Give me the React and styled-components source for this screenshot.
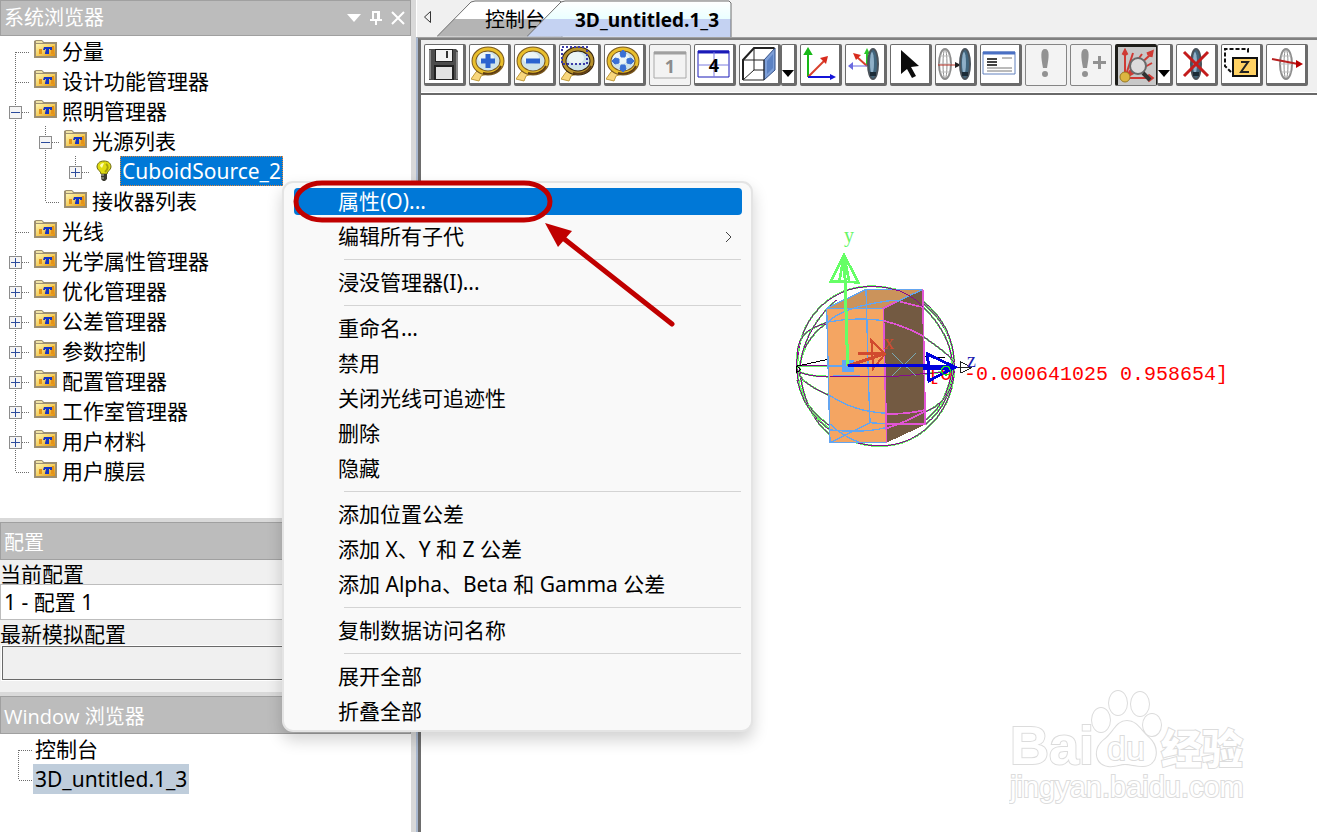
import React from "react";
import styled, { createGlobalStyle, css } from "styled-components";

const Global = createGlobalStyle`
  *, *::before, *::after { box-sizing: border-box; }
  body { margin: 0; background: #fff; }
  body, button, input, select {
    font-family: "Noto Sans", "Noto Sans CJK SC", sans-serif;
    font-size: 21px;
    color: #000;
  }
  button { padding: 0; border: 0; background: none; text-align: left; }
  ul { list-style: none; margin: 0; padding: 0; }
  svg { display: block; flex: none; }
`;

const Shell = styled.div`
  position: relative;
  display: flex;
  min-height: 100vh;
  overflow: hidden;
  background: #d9d9d9;
`;

const Sidebar = styled.aside`
  flex: none;
  width: 411px;
  display: flex;
  flex-direction: column;
  gap: 4px;
`;

const Panel = styled.section`
  display: flex;
  flex-direction: column;
  flex-grow: ${(p) => (p.$grow ? 1 : 0)};
  min-height: ${(p) => p.$min || 0}px;
  background: ${(p) => p.$bg || "#fff"};
`;

const PanelHead = styled.header`
  display: flex;
  align-items: center;
  justify-content: space-between;
  height: ${(p) => (p.$first ? 36 : 38)}px;
  padding: ${(p) => (p.$first ? 0 : 3)}px 3px 0;
  border: 1px solid #a0a0a0;
  background: #bcbcbc;
`;

const PanelTitle = styled.h2`
  margin: 0;
  font-family: "Open Sans", "Noto Sans CJK SC", sans-serif;
  font-size: 20px;
  line-height: 28px;
  font-weight: 400;
  color: #fff;
`;

const HeadTools = styled.div`
  display: flex;
  gap: 4px;
`;

const HeadButton = styled.button`
  width: 18px;
  height: 18px;
`;

const Row = styled.li`
  display: flex;
  height: 30px;
`;

const GuideButton = styled.button`
  display: block;
  width: 30px;
  height: 30px;
`;

const IconSlot = styled.span`
  display: flex;
  justify-content: center;
  width: 24px;
  margin: 4px 2px 0 4px;
`;

const RowLabel = styled.span`
  padding: 0 2px;
  line-height: 30px;
  white-space: nowrap;
  ${(p) =>
    p.$state === "selected" &&
    css`
      background: #0078d7;
      color: #fff;
      outline: 1px dotted #e8883a;
      outline-offset: -1px;
    `}
  ${(p) => p.$state === "inactive" && css`background: #bfcddb;`}
`;

const FieldLabel = styled.label`
  height: ${(p) => p.$h || 24}px;
  line-height: 28px;
`;

const ConfigSelect = styled.select`
  appearance: none;
  height: 36px;
  padding: 0 3px;
  border: 1px solid #bdbdbd;
  border-radius: 0;
  background: #fff;
`;

const ReadOnlyBox = styled.input`
  height: 34px;
  margin: 1px 0 12px 2px;
  border: 1px solid #696969;
  outline: 1px solid #fff;
  background: #f0f0f0;
`;

const Main = styled.main`
  flex: 1;
  min-width: 0;
  margin-left: 5px;
  display: flex;
  flex-direction: column;
  background: #f0f0f0;
`;

const TabBar = styled.nav`
  display: flex;
  height: 37px;
  padding-left: 5px;
  border-left: 1px solid #fff;
`;

const TabScroll = styled.button`
  width: 15px;
  height: 36px;
`;

const Tab = styled.button`
  position: relative;
  z-index: 0;
  height: 37px;
  width: ${(p) => p.$w}px;
  padding: 2px 0 0 48px;
  margin-right: -36px;
  font-family: "Open Sans", "Noto Sans CJK SC", sans-serif;
  font-size: ${(p) => (p.$active ? 19 : 20)}px;
  line-height: 34px;
  font-weight: ${(p) => (p.$active ? 700 : 400)};
  white-space: nowrap;
`;

const TabShape = styled.svg`
  position: absolute;
  z-index: -1;
  inset: 0;
`;

const Frame = styled.div`
  flex: 1;
  display: flex;
  flex-direction: column;
  border-left: 2px solid #a9b8cf;
  border-top: 1px solid #a0a0a0;
`;

const Inner = styled.div`
  flex: 1;
  display: flex;
  flex-direction: column;
  border-left: 3px solid #6d6d6d;
  border-top: 2px solid #808080;
`;

const Toolbar = styled.div`
  display: flex;
  flex: none;
  gap: 3px;
  height: 53px;
  padding: 4px 3px 0;
  overflow: hidden;
  border-bottom: 1px solid #fff;
`;

const ToolGroup = styled.div`
  display: flex;
`;

const ToolButton = styled.button`
  flex: none;
  display: flex;
  align-items: center;
  justify-content: center;
  width: 42px;
  height: 42px;
  border: solid #6b6b6b;
  border-width: 1px 3px 3px 1px;
  border-radius: 2px;
  background: #fff;
  ${(p) => p.disabled && css`border-width: 1px; border-color: #858585; background: #f3f3f3;`}
  ${(p) =>
    p.$pressed &&
    css`border: 3px solid #1e1e1a; border-right-width: 1px; border-bottom: 1px solid #777; background: #c8c8c8;`}
`;

const DropButton = styled(ToolButton)`
  width: 16px;
  align-items: flex-end;
`;

const Canvas = styled.div`
  position: relative;
  flex: 1;
  border-top: 2px solid #696969;
  background: #fff;
`;

const Scene = styled.svg`
  position: absolute;
  left: 359px;
  top: 125px;
`;

const Watermark = styled.svg`
  position: absolute;
  right: 58px;
  bottom: 20px;
`;

const Menu = styled.ul`
  position: absolute;
  left: 282px;
  top: 181px;
  width: 471px;
  && { padding: 1px 9px 1px 10px; }
  border: 2px solid #e4e4e4;
  border-radius: 11px;
  background: #f9f9f9;
  box-shadow: 0 8px 16px rgba(0, 0, 0, 0.18);
`;

const MenuItem = styled.button`
  display: flex;
  align-items: center;
  justify-content: space-between;
  width: 448px;
  height: ${(p) => (p.$on ? 27 : 35)}px;
  margin: ${(p) => (p.$on ? 4 : 0)}px 0;
  padding: 0 9px 0 44px;
  border-radius: 4px;
  line-height: 27px;
  white-space: nowrap;
  ${(p) => p.$on && css`background: #0078d7; color: #fff;`}
`;

const Divider = styled.li`
  height: 1px;
  margin: 5px 1px 5px 50px;
  background: #d4d4d4;
`;

const Annotation = styled.svg`
  position: absolute;
  left: 283px;
  top: 170px;
  pointer-events: none;
`;

const dots = { stroke: "#6c6c6c", strokeDasharray: "1 1", strokeWidth: 1, fill: "none" };

/* One 30px cell of the tree's connector lines. */
function Guide({ up, down, across, box, w = 30, x = 15.5 }) {
  return (
    <svg width={w} height="30" shapeRendering="crispEdges">
      {up && <path d={`M${x} 0V16`} {...dots} />}
      {down && <path d={`M${x} 16V30`} {...dots} />}
      {across && <path d={`M${x} 16.5H${w}`} {...dots} />}
      {box && (
        <g>
          <rect x="9.5" y="10.5" width="12" height="12" rx="1" fill="#f5f5f5" stroke="#8c8c8c" />
          <path d={box === "+" ? "M11 16.5H20M15.5 12V21" : "M11 16.5H20"} stroke="#2b4a9b" fill="none" />
        </g>
      )}
    </svg>
  );
}

const Folder = () => (
  <svg width="24" height="20" viewBox="0 0 24 20">
    <defs>
      <linearGradient id="fold" x1="0" y1="0" x2="1" y2="1">
        <stop offset="0" stopColor="#fff6b0" />
        <stop offset=".5" stopColor="#f6d060" />
        <stop offset="1" stopColor="#e08c0c" />
      </linearGradient>
    </defs>
    <path d="M0 1L2 0H8L10 2H23V18H0Z" fill="#9d8f72" />
    <path d="M2 1H8L9 3H2Z" fill="#efe2a6" />
    <rect x="2" y="4" width="19" height="12" fill="url(#fold)" />
    <path d="M5 9H8V14H5ZM17 9L17 14H20V6H18Z" fill="#e3921a" />
    <path d="M10 7H18V10H16V9H15V14H11V13L12 9H11V10H9Z" fill="#1433c4" />
  </svg>
);

const Bulb = () => (
  <svg width="20" height="22" viewBox="0 0 20 22">
    <path d="M8 1C3 1 1 4 1 7S5 11 5 14H11C11 11 15 10 15 7S13 1 8 1Z" fill="#e0dc10" stroke="#6d6a12" />
    <path d="M4 6C4 4 6 3 8 3L6 8Z" fill="#ffffb0" />
    <path d="M10 4C13 6 12 9 9 12" fill="none" stroke="#a5a008" strokeWidth="2" />
    <path d="M5 14H11V19L9 21H7L5 19Z" fill="#3a3a30" />
    <path d="M5 15H8M5 18H8" stroke="#b9b9a8" />
  </svg>
);

const TREE = [
  { t: "分量", first: true },
  { t: "设计功能管理器" },
  { t: "照明管理器", box: "-" },
  { t: "光源列表", lvl: 1, box: "-" },
  { t: "CuboidSource_2", lvl: 2, box: "+", bulb: true },
  { t: "接收器列表", lvl: 1, last: true },
  { t: "光线" },
  { t: "光学属性管理器", box: "+" },
  { t: "优化管理器", box: "+" },
  { t: "公差管理器", box: "+" },
  { t: "参数控制", box: "+" },
  { t: "配置管理器", box: "+" },
  { t: "工作室管理器", box: "+" },
  { t: "用户材料", box: "+" },
  { t: "用户膜层", last: true },
];

function TreeRow({ t, lvl = 0, box, first, last, bulb }) {
  const own = <Guide up={!first} down={!last && !bulb} across box={box} />;
  return (
    <Row>
      {Array.from({ length: lvl }, (_, i) => (
        <Guide key={i} up down />
      ))}
      {box ? <GuideButton aria-label={`${box} ${t}`}>{own}</GuideButton> : own}
      <IconSlot>{bulb ? <Bulb /> : <Folder />}</IconSlot>
      <RowLabel $state={bulb && "selected"}>{t}</RowLabel>
    </Row>
  );
}

/* Toolbar drawings, each on a 36px grid. */
const Lens = ({ children, dark }) => (
  <g>
    <path d="M0 33L8 35L10 30L16 28L8 23L5 26Z" fill="#f8d67c" stroke="#c09a38" />
    <ellipse cx="17" cy="15" rx="14" ry="12" fill="#cfe3ea" stroke={dark ? "#33220e" : "#7a5a22"} strokeWidth="5" />
    <ellipse cx="17" cy="15" rx="14" ry="12" fill="none" stroke={dark ? "#b8922c" : "#e9bf2c"} strokeWidth="3" />
    <path d="M30 20A14 12 0 0 1 12 27" fill="none" stroke="#5f3d14" strokeWidth="2" />
    <ellipse cx="15" cy="12" rx="8" ry="6" fill="#ecf5f6" />
    {children}
  </g>
);

const LensSide = ({ cx }) => (
  <g>
    <ellipse cx={cx} cy="18" rx="5" ry="15" fill="#41667e" stroke="#4a525a" strokeWidth="2" />
    <ellipse cx={cx - 1} cy="17" rx="2" ry="11" fill="#8fb0c8" />
    <path d={`M${cx - 3} 28H${cx + 3}`} stroke="#1c2c38" strokeWidth="4" />
  </g>
);

const WireLens = ({ cx }) => (
  <g fill="none" stroke="#8d8d8d">
    <ellipse cx={cx} cy="18" rx="6" ry="15" strokeWidth="2" />
    <ellipse cx={cx} cy="18" rx="2" ry="15" />
    <path d={`M${cx - 5} 10H${cx + 5}M${cx - 6} 18H${cx + 6}M${cx - 5} 26H${cx + 5}`} stroke="#bdbdbd" />
  </g>
);

const ICONS = {
  save: (
    <g>
      <path d="M3 3H30L32 5V34H3Z" fill="#4d4d4d" />
      <path d="M4 4V33M31 6V33" stroke="#8a8a8a" strokeWidth="2" />
      <rect x="9" y="3" width="18" height="13" fill="#222" />
      <rect x="10" y="4" width="16" height="11" fill="#f2f2f2" />
      <path d="M21 5V12" stroke="#333" strokeWidth="2" />
      <rect x="8" y="19" width="20" height="15" fill="#222" />
      <rect x="10" y="21" width="16" height="12" fill="#e3e3e3" />
    </g>
  ),
  zoomIn: <Lens><path d="M10 15H24M17 8V22" stroke="#2b63cf" strokeWidth="5" /></Lens>,
  zoomOut: <Lens><path d="M10 15H24" stroke="#2b63cf" strokeWidth="5" /></Lens>,
  zoomBox: (
    <Lens dark>
      <path d="M1 1H26V18H1Z" fill="none" stroke="#3b3ba8" strokeWidth="2" strokeDasharray="2 2" />
    </Lens>
  ),
  zoomFit: (
    <Lens>
      <path d="M17 4L20 7L19 11H15L14 7ZM17 26L20 23L19 19H15L14 23ZM6 15L9 12L13 13V17L9 18ZM28 15L25 12L21 13V17L25 18Z" fill="#3a70d4" stroke="#3a70d4" />
    </Lens>
  ),
  one: (
    <g>
      <path d="M2 5H34V31H2Z" fill="#f3f3f3" stroke="#a9a9a9" />
      <path d="M2 6H34" stroke="#a0a0a0" strokeWidth="3" />
      <text x="18" y="26" textAnchor="middle" fontSize="18" fontWeight="700" fill="#8c8c8c">1</text>
    </g>
  ),
  four: (
    <g>
      <path d="M2 5H33V31H2Z" fill="#fff" stroke="#1a1ab8" strokeWidth="1" />
      <path d="M2 6H33" stroke="#1a1ab8" strokeWidth="3" />
      <path d="M2 19H33M18 6V31" stroke="#7d7de0" />
      <text x="18" y="26" textAnchor="middle" fontSize="18" fontWeight="700">4</text>
    </g>
  ),
  cube: (
    <g fill="none" stroke="#222">
      <path d="M23 14L34 2V24L23 34Z" fill="#7d9fd8" stroke="#334f86" />
      <path d="M26 15L32 8V22L26 28Z" fill="#5b82c4" stroke="none" />
      <path d="M2 14H23V34H2ZM2 14L13 2H34M13 2V24M2 34L13 24H23" strokeWidth="1" />
      <path d="M2 34V14L13 2H33" strokeWidth="2" />
    </g>
  ),
  axes: (
    <g fill="none" strokeWidth="2">
      <path d="M6 31V6" stroke="#17b817" /><path d="M3 8L6 3L9 8Z" fill="#17b817" stroke="#17b817" />
      <path d="M6 31L24 13" stroke="#d8402c" /><path d="M18 12L26 10L24 18Z" fill="#d82a1c" />
      <path d="M6 31H30" stroke="#1414d8" /><path d="M28 28L34 31L28 34Z" fill="#1414d8" />
    </g>
  ),
  lensAxes: (
    <g>
      <path d="M20 20V6" stroke="#28c828" strokeWidth="2" /><path d="M17 8L20 2L23 8Z" fill="#28c828" />
      <path d="M20 20L10 11" stroke="#d8402c" strokeWidth="2" /><path d="M6 7L14 9L9 14Z" fill="#d82a1c" />
      <path d="M20 20H5" stroke="#6a6ae0" /><path d="M6 16L1 20L6 24Z" fill="#6a6ae0" />
      <LensSide cx={26} />
    </g>
  ),
  pointer: <path d="M9 4V28L15 23L20 32L24 30L19 21L27 20Z" fill="#0c0c0c" />,
  wireLens: <g><WireLens cx={8} /><path d="M1 19H20" stroke="#b83024" strokeWidth="1" /><path d="M18 16L24 19L18 22Z" fill="#222" /><LensSide cx={28} /></g>,
  table: (
    <g>
      <path d="M1 6H33V28H1Z" fill="#fff" stroke="#6080bd" strokeWidth="1" />
      <path d="M1 7H33" stroke="#4a70c4" strokeWidth="3" />
      <path d="M5 13H15M5 16H15M5 19H15" stroke="#444" strokeWidth="2" />
      <path d="M20 12H30M5 22H30M5 25H30" stroke="#777" />
    </g>
  ),
  bang: <path d="M17 2C22 2 21 10 19 21H15C13 10 12 2 17 2ZM17 24A3 3 0 1 1 17 30A3 3 0 1 1 17 24" fill="#929292" />,
  bangPlus: (
    <g fill="#929292">
      <path d="M12 2C17 2 16 10 14 21H10C8 10 7 2 12 2ZM12 24A3 3 0 1 1 12 30A3 3 0 1 1 12 24" />
      <path d="M20 14H25V9H28V14H33V17H28V22H25V17H20Z" />
    </g>
  ),
  rays: (
    <g>
      <g stroke="#cf3a34" strokeWidth="2" fill="none">
        <path d="M6 30V4M6 30L14 5M6 30L23 6M6 30L31 7M6 30L33 15M6 30H34" />
        <path d="M4 7L6 3L8 7M28 6L33 4L32 9M29 27L33 30L29 33" strokeWidth="3" />
      </g>
      <circle cx="6" cy="29" r="5" fill="#dcb640" stroke="#9a7a20" />
      <circle cx="19" cy="18" r="8" fill="#dcdcdc" stroke="#6a6a6a" strokeWidth="2" />
      <path d="M24 25L31 32" stroke="#333" strokeWidth="4" />
    </g>
  ),
  noLens: <g><LensSide cx={18} /><path d="M6 6L30 30M30 6L6 30" stroke="#c41c1c" strokeWidth="3" /></g>,
  z: (
    <g>
      <path d="M8 26L2 20V3H25V8" fill="none" stroke="#111" strokeWidth="2" strokeDasharray="4 2" />
      <rect x="10" y="12" width="24" height="18" fill="#ffd264" stroke="#111" strokeWidth="2" />
      <path d="M18 16H25L18 26H26" fill="none" stroke="#222" strokeWidth="2" />
    </g>
  ),
  wireRay: <g><WireLens cx={18} /><path d="M4 13L30 18" stroke="#b82020" strokeWidth="2" /><path d="M28 14L35 18L28 22Z" fill="#b80000" /></g>,
};

const TOOLS = [
  ["save", "保存"], ["zoomIn", "放大"], ["zoomOut", "缩小"], ["zoomBox", "缩放窗口"], ["zoomFit", "全部缩放"],
  ["one", "单视图", { disabled: true }], ["four", "四视图"], ["cube", "视图方向", { drop: true }], ["axes", "坐标轴"],
  ["lensAxes", "局部坐标"], ["pointer", "选择"], ["wireLens", "线框"], ["table", "表格"],
  ["bang", "更新", { disabled: true }], ["bangPlus", "追加", { disabled: true }],
  ["rays", "光线", { drop: true, pressed: true }], ["noLens", "隐藏"], ["z", "层次"], ["wireRay", "光路"],
];

const Tool = ({ icon, label, disabled, pressed }) => (
  <ToolButton aria-label={label} disabled={disabled} $pressed={pressed}>
    <svg width="36" height="36" viewBox="0 0 36 36">{ICONS[icon]}</svg>
  </ToolButton>
);

const MENU = [
  "属性(O)...", "编辑所有子代", null, "浸没管理器(I)...", null,
  "重命名...", "禁用", "关闭光线可追迹性", "删除", "隐藏", null,
  "添加位置公差", "添加 X、Y 和 Z 公差", "添加 Alpha、Beta 和 Gamma 公差", null,
  "复制数据访问名称", null, "展开全部", "折叠全部",
];

function SceneDrawing() {
  /* Silhouette, meridians and latitude arcs of the bounding sphere. */
  const curves = [
    "M275 199C410 199 523 305 523 438S425 678 300 678S52 580 52 438S150 199 275 199Z",
    "M52 400C56 340 90 325 145 306M52 400C44 500 70 560 150 618",
    "M145 306C80 350 66 400 58 440C66 530 95 600 150 645",
    "M170 240C110 290 70 360 60 438",
    "M430 245C500 300 520 370 523 430C518 510 490 570 436 614",
    "M430 262C490 320 515 380 518 438C510 510 480 570 436 600",
    "M52 480C70 560 110 600 150 630M520 480C510 520 480 560 436 575",
    "M145 525C90 500 60 480 56 455M430 350C480 385 515 410 522 430",
    "M52 438H145M56 455C80 466 110 470 150 470M436 462C480 458 510 452 523 445",
  ];
  return (
    <Scene width="470" height="240" viewBox="0 0 470 240">
      <g transform="scale(.3333)" fill="none" strokeWidth="3" shapeRendering="crispEdges">
        {curves.map((d) => (
          <g key={d}>
            <path d={d} stroke="#66f566" strokeWidth="6" />
            <path d={d} stroke="#850b8d" />
          </g>
        ))}
        <path d="M52 438L145 418M330 206L350 212M145 525L160 530M436 408L495 414M50 438L62 448L50 458Z" stroke="#000" />
        <path d="M140 265L310 265L320 668L150 668Z" fill="#f4a562" />
        <path d="M140 265L258 208H428L310 265Z" fill="#cb935b" />
        <path d="M310 265L428 208L436 614L320 668Z" fill="#735a42" />
        <g stroke="#63a5f0" strokeWidth="4">
          <path d="M140 265H310M140 265L150 668H320M140 265L258 208H428L310 265" />
          <path d="M258 208L266 500L270 608L150 668M270 608L320 612M145 306Q230 290 310 302M145 305Q190 260 330 242H360" />
          <path d="M148 525Q220 575 320 580M150 612Q190 650 240 668M150 630Q260 640 320 622M145 438H200M160 468H240" />
        </g>
        <g stroke="#e155d5" strokeWidth="5">
          <path d="M310 265L320 668M428 208L436 614M310 302Q380 320 432 350M360 245L430 262M320 582Q390 582 434 570M320 612H436M320 625Q380 605 434 575M350 245L310 265" />
        </g>
        <path d="M330 206C370 212 400 230 430 262M150 470H300C360 470 400 464 440 460" stroke="#850b8d" />
        <path d="M336 400L408 468M408 400L336 468" stroke="#79a9b4" />
        <rect x="186" y="420" width="36" height="36" fill="#62a6f4" />
        <path d="M203 438L193 105" stroke="#66ff66" strokeWidth="9" />
        <path d="M192 105L153 184L235 187ZM192 105L178 184M192 105L208 186" stroke="#66ff66" strokeWidth="8" />
        <path d="M203 438L310 402M235 402H315" stroke="#d14a2e" strokeWidth="9" />
        <path d="M315 402L274 362L280 445Z" stroke="#d14a2e" strokeWidth="6" />
        <path d="M540 425L575 443L542 460ZM525 442H575" stroke="#222" />
      </g>
      <text x="148" y="160" fontFamily="Liberation Mono" fontSize="20" fill="#f00">[0 -0.000641025 0.958654]</text>
      <g transform="scale(.3333)" fill="none" shapeRendering="crispEdges">
        <path d="M203 438H440" stroke="#0000dc" strokeWidth="9" />
        <path d="M430 442H520" stroke="#0000dc" strokeWidth="14" />
        <path d="M443 402L525 442L447 482Z" stroke="#0000dc" strokeWidth="9" />
        <circle cx="498" cy="452" r="13" stroke="#1be01b" strokeWidth="4" />
      </g>
      <g fontFamily="Liberation Serif" fontSize="20">
        <text x="64" y="22" fill="#66f566">y</text>
        <text x="104" y="129" fill="#d14a2e">x</text>
        <text x="187" y="147" fill="#1a1ab0">z</text>
      </g>
    </Scene>
  );
}

const Brand = () => (
  <Watermark width="250" height="130" viewBox="0 0 250 130" fill="#fff" stroke="#dcdcdc" strokeWidth="2">
    <g fontFamily="Liberation Sans" paintOrder="stroke">
      <text x="1" y="82" fontSize="54" fontWeight="700">Bai</text>
      <g>
        <ellipse cx="92" cy="38" rx="9" ry="12" />
        <ellipse cx="109" cy="21" rx="9" ry="12" />
        <ellipse cx="131" cy="22" rx="9" ry="12" />
        <ellipse cx="143" cy="43" rx="9" ry="11" />
        <path d="M118 39C128 39 131 48 139 55C151 65 149 84 134 84C126 84 122 82 116 82C110 82 107 85 99 84C86 82 84 67 95 58C105 51 107 39 118 39Z" />
      </g>
      <text x="98" y="78" fontSize="34">du</text>
      <text x="1" y="115" fontSize="29">jingyan.baidu.com</text>
    </g>
    <text x="152" y="82" fontSize="41" fontWeight="900" fontFamily="Noto Sans CJK SC" paintOrder="stroke">经验</text>
  </Watermark>
);

const TabBack = ({ w, id, top, bottom }) => (
  <TabShape width={w} height="37">
    <defs>
      <linearGradient id={id} x1="0" y1="0" x2="0" y2="1">
        <stop offset="0" stopColor="#fff" />
        <stop offset=".5" stopColor={top} />
        <stop offset=".5" stopColor={bottom} />
        <stop offset="1" stopColor={bottom} />
      </linearGradient>
    </defs>
    <path d={`M0 36.5L34 2L38 1H${w - 3}L${w - 1} 3V37`} fill={`url(#${id})`} stroke="#6f6f6f" />
  </TabShape>
);

export default function App() {
  return (
    <Shell lang="zh-CN">
      <Global />
      <Sidebar>
        <Panel $grow>
          <PanelHead $first>
            <PanelTitle>系统浏览器</PanelTitle>
            <HeadTools>
              <HeadButton aria-label="菜单">
                <svg width="18" height="18"><path d="M2 5H16L9 13Z" fill="#fff" /></svg>
              </HeadButton>
              <HeadButton aria-label="固定">
                <svg width="18" height="18" fill="none" stroke="#fff" strokeWidth="2"><path d="M6 11V3H12V11M3 11H15M9 11V16M11 3V11" /></svg>
              </HeadButton>
              <HeadButton aria-label="关闭">
                <svg width="18" height="18" stroke="#fff" strokeWidth="2"><path d="M3 3L15 15M15 3L3 15" /></svg>
              </HeadButton>
            </HeadTools>
          </PanelHead>
          <ul>{TREE.map((n) => <TreeRow key={n.t} {...n} />)}</ul>
        </Panel>
        <Panel $bg="#f0f0f0">
          <PanelHead><PanelTitle>配置</PanelTitle></PanelHead>
          <FieldLabel htmlFor="cur">当前配置</FieldLabel>
          <ConfigSelect id="cur"><option>1 - 配置 1</option></ConfigSelect>
          <FieldLabel htmlFor="sim" $h={25}>最新模拟配置</FieldLabel>
          <ReadOnlyBox id="sim" readOnly />
        </Panel>
        <Panel $min={136}>
          <PanelHead><PanelTitle>Window 浏览器</PanelTitle></PanelHead>
          <ul>
            <Row><Guide w={33} x={18.5} down across /><RowLabel>控制台</RowLabel></Row>
            <Row><Guide w={33} x={18.5} up across /><RowLabel $state="inactive">3D_untitled.1_3</RowLabel></Row>
          </ul>
        </Panel>
      </Sidebar>

      <Main>
        <TabBar>
          <TabScroll aria-label="上一个">
            <svg width="15" height="36"><path d="M8.5 11.5V22.5L2.5 17Z" fill="none" stroke="#333" strokeWidth="1" /></svg>
          </TabScroll>
          <Tab $w={126}><TabBack w={126} id="t1" top="#fff" bottom="#b4b4b4" />控制台</Tab>
          <Tab $w={205} $active><TabBack w={205} id="t2" top="#eaffff" bottom="#c4d2f2" />3D_untitled.1_3</Tab>
        </TabBar>
        <Frame>
          <Inner>
            <Toolbar role="toolbar">
              {TOOLS.map(([icon, label, opt = {}]) =>
                opt.drop ? (
                  <ToolGroup key={icon}>
                    <Tool icon={icon} label={label} pressed={opt.pressed} />
                    <DropButton aria-label={`${label} 选项`}>
                      <svg width="12" height="16"><path d="M0 3H12L6 10Z" fill="#000" /></svg>
                    </DropButton>
                  </ToolGroup>
                ) : (
                  <Tool key={icon} icon={icon} label={label} disabled={opt.disabled} />
                )
              )}
            </Toolbar>
            <Canvas>
              <SceneDrawing />
              <Brand />
            </Canvas>
          </Inner>
        </Frame>
      </Main>

      <Menu>
        {MENU.map((m, i) =>
          m === null ? (
            <Divider key={i} role="separator" />
          ) : (
            <li key={i}>
              <MenuItem $on={i === 0}>
                {m}
                {i === 1 && (
                  <svg width="10" height="12" fill="none" stroke="#444" strokeWidth="1"><path d="M3 1L8 6L3 11" /></svg>
                )}
              </MenuItem>
            </li>
          )
        )}
      </Menu>
      <Annotation width="400" height="160">
        <rect x="13" y="13" width="254" height="37" rx="26" ry="19" fill="none" stroke="#c00000" strokeWidth="5" />
        <path d="M280 68L389 154" stroke="#c00000" strokeWidth="5" strokeLinecap="round" />
        <path d="M262 53L289 61L275 77Z" fill="#c00000" />
      </Annotation>
    </Shell>
  );
}
